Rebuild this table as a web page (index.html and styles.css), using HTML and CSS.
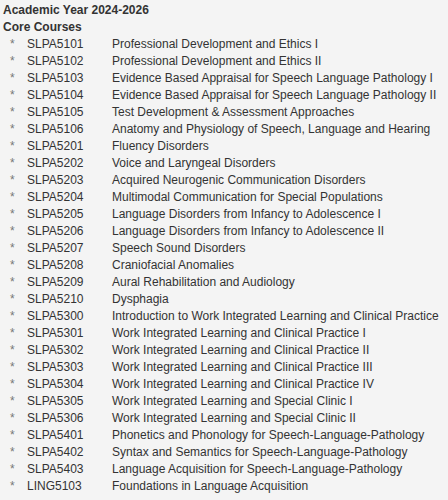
FILE: index.html
```html
<!DOCTYPE html>
<html>
<head>
<meta charset="utf-8">
<link rel="stylesheet" href="styles.css">
</head>
<body>
<div class="page">
  <div class="title">Academic Year 2024-2026</div>
  <div class="title">Core Courses</div>
  <ul class="courses">
    <li><span class="star">*</span><span class="code">SLPA5101</span><span class="name">Professional Development and Ethics I</span></li>
    <li><span class="star">*</span><span class="code">SLPA5102</span><span class="name">Professional Development and Ethics II</span></li>
    <li><span class="star">*</span><span class="code">SLPA5103</span><span class="name">Evidence Based Appraisal for Speech Language Pathology I</span></li>
    <li><span class="star">*</span><span class="code">SLPA5104</span><span class="name">Evidence Based Appraisal for Speech Language Pathology II</span></li>
    <li><span class="star">*</span><span class="code">SLPA5105</span><span class="name">Test Development &amp; Assessment Approaches</span></li>
    <li><span class="star">*</span><span class="code">SLPA5106</span><span class="name">Anatomy and Physiology of Speech, Language and Hearing</span></li>
    <li><span class="star">*</span><span class="code">SLPA5201</span><span class="name">Fluency Disorders</span></li>
    <li><span class="star">*</span><span class="code">SLPA5202</span><span class="name">Voice and Laryngeal Disorders</span></li>
    <li><span class="star">*</span><span class="code">SLPA5203</span><span class="name">Acquired Neurogenic Communication Disorders</span></li>
    <li><span class="star">*</span><span class="code">SLPA5204</span><span class="name">Multimodal Communication for Special Populations</span></li>
    <li><span class="star">*</span><span class="code">SLPA5205</span><span class="name">Language Disorders from Infancy to Adolescence I</span></li>
    <li><span class="star">*</span><span class="code">SLPA5206</span><span class="name">Language Disorders from Infancy to Adolescence II</span></li>
    <li><span class="star">*</span><span class="code">SLPA5207</span><span class="name">Speech Sound Disorders</span></li>
    <li><span class="star">*</span><span class="code">SLPA5208</span><span class="name">Craniofacial Anomalies</span></li>
    <li><span class="star">*</span><span class="code">SLPA5209</span><span class="name">Aural Rehabilitation and Audiology</span></li>
    <li><span class="star">*</span><span class="code">SLPA5210</span><span class="name">Dysphagia</span></li>
    <li><span class="star">*</span><span class="code">SLPA5300</span><span class="name">Introduction to Work Integrated Learning and Clinical Practice</span></li>
    <li><span class="star">*</span><span class="code">SLPA5301</span><span class="name">Work Integrated Learning and Clinical Practice I</span></li>
    <li><span class="star">*</span><span class="code">SLPA5302</span><span class="name">Work Integrated Learning and Clinical Practice II</span></li>
    <li><span class="star">*</span><span class="code">SLPA5303</span><span class="name">Work Integrated Learning and Clinical Practice III</span></li>
    <li><span class="star">*</span><span class="code">SLPA5304</span><span class="name">Work Integrated Learning and Clinical Practice IV</span></li>
    <li><span class="star">*</span><span class="code">SLPA5305</span><span class="name">Work Integrated Learning and Special Clinic I</span></li>
    <li><span class="star">*</span><span class="code">SLPA5306</span><span class="name">Work Integrated Learning and Special Clinic II</span></li>
    <li><span class="star">*</span><span class="code">SLPA5401</span><span class="name">Phonetics and Phonology for Speech-Language-Pathology</span></li>
    <li><span class="star">*</span><span class="code">SLPA5402</span><span class="name">Syntax and Semantics for Speech-Language-Pathology</span></li>
    <li><span class="star">*</span><span class="code">SLPA5403</span><span class="name">Language Acquisition for Speech-Language-Pathology</span></li>
    <li><span class="star">*</span><span class="code">LING5103</span><span class="name">Foundations in Language Acquisition</span></li>
  </ul>
</div>
</body>
</html>
```

FILE: styles.css
```css
html, body {
  margin: 0;
  padding: 0;
  background: #f4f4f4;
}
.page {
  padding: 2px 0 0 3px;
  font-family: "Liberation Sans", Arial, sans-serif;
  font-size: 12px;
  line-height: 17px;
  color: #333333;
}
.title {
  font-weight: bold;
}
.courses {
  list-style: none;
  margin: 0;
  padding: 0;
}
.courses li {
  display: flex;
  white-space: nowrap;
}
.star {
  flex: none;
  width: 24px;
  padding-left: 7px;
  box-sizing: border-box;
  color: #777777;
}
.code {
  flex: none;
  width: 85px;
}
.name {
  flex: none;
}
```
